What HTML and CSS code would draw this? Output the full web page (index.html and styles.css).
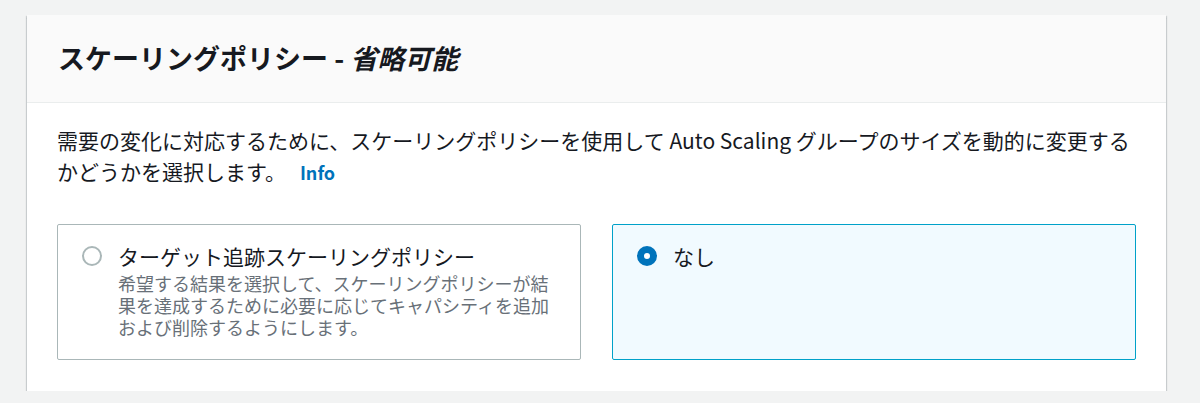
FILE: index.html
```html
<!DOCTYPE html>
<html lang="ja">
<head>
<meta charset="utf-8">
<title>スケーリングポリシー</title>
<link rel="stylesheet" href="styles.css">
</head>
<body>
<section class="container">
  <header class="container-header">
    <h2 class="title">スケーリングポリシー - <em class="optional">省略可能</em></h2>
  </header>
  <div class="container-body">
    <p class="intro"><span class="intro-text">需要の変化に対応するために、スケーリングポリシーを使用して Auto Scaling グループのサイズを動的に変更するかどうかを選択します。</span><a class="info" href="#">Info</a></p>
    <div class="tiles">
      <label class="tile">
        <span class="radio"></span>
        <span class="tile-text">
          <span class="tile-label">ターゲット追跡スケーリングポリシー</span>
          <span class="tile-desc">希望する結果を選択して、スケーリングポリシーが結果を達成するために必要に応じてキャパシティを追加および削除するようにします。</span>
        </span>
      </label>
      <label class="tile tile-selected">
        <span class="radio radio-checked"></span>
        <span class="tile-text">
          <span class="tile-label">なし</span>
        </span>
      </label>
    </div>
  </div>
</section>
</body>
</html>
```

FILE: styles.css
```css
html, body {
  margin: 0;
  padding: 0;
}

body {
  background: #f2f3f3;
  font-family: "Noto Sans CJK JP", "Noto Sans", sans-serif;
  color: #16191f;
  padding: 15px 34px 0 27px;
}

.container {
  background: #ffffff;
  box-shadow: 0 1.5px 1px 0 rgba(0, 28, 36, 0.35), 1px 1px 1px 0 rgba(0, 28, 36, 0.15), -1px 1px 1px 0 rgba(0, 28, 36, 0.15);
}

.container-header {
  background: #fafafa;
  border-bottom: 1px solid #eaeded;
  height: 88px;
  display: flex;
  align-items: center;
  padding: 0 30px 2px 31px;
  box-sizing: border-box;
}

.title {
  margin: 0;
  font-size: 27px;
  font-weight: 700;
  line-height: 36px;
  color: #16191f;
}

.optional {
  font-style: italic;
}

.container-body {
  padding: 22px 30px 31px 30px;
}

.intro {
  margin: 0;
  font-size: 21px;
  line-height: 31px;
  color: #16191f;
}

.info {
  margin-left: 14px;
  font-size: 18px;
  line-height: 24px;
  font-weight: 700;
  color: #0073bb;
  text-decoration: none;
}

.tiles {
  display: grid;
  grid-template-columns: 1fr 1fr;
  column-gap: 31px;
  margin-top: 37px;
}

.tile {
  display: flex;
  align-items: flex-start;
  gap: 16px;
  border: 1px solid #aab7b8;
  border-radius: 2px;
  padding: 16px 24px 18px 24px;
  min-height: 136px;
  box-sizing: border-box;
  background: #ffffff;
}

.tile-selected {
  border-color: #00a1c9;
  background: #f1faff;
}

.radio {
  flex: none;
  width: 20px;
  height: 20px;
  margin-top: 5px;
  border-radius: 50%;
  border: 2px solid #aab7b8;
  box-sizing: border-box;
  background: #ffffff;
}

.radio-checked {
  border: 7px solid #0073bb;
}

.tile-text {
  display: flex;
  flex-direction: column;
  min-width: 0;
}

.tile-label {
  font-size: 21px;
  line-height: 31px;
  color: #16191f;
}

.tile-desc {
  font-size: 18px;
  line-height: 22px;
  color: #687078;
}
```
